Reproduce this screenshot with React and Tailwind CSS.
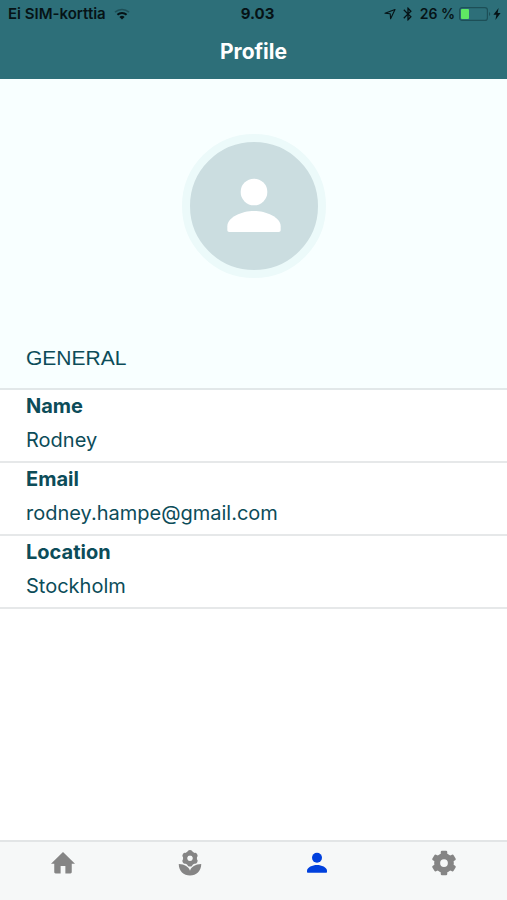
import { useState } from 'react';
import { MdBluetooth } from 'react-icons/md';


const profile = [
    { label: "Name", value: "Rodney" },
    { label: "Email", value: "rodney.hampe@gmail.com" },
    { label: "Location", value: "Stockholm" },
];

const angles = [0, 60, 120, 180, 240, 300];


function HomeIcon({ className }) {
    return (
        <svg viewBox="0 0 24 24" className={className} fill="currentColor" aria-hidden="true">
            <path d="M12 3.2 2.4 12.6H5v6.6c0 .7.4 1.1 1.1 1.1h4v-6h3.8v6h4c.7 0 1.1-.4 1.1-1.1v-6.6h2.6z" />
        </svg>
    );
}

function FlowerIcon({ className }) {
    return (
        <svg viewBox="0 0 24 24" className={className} fill="currentColor" aria-hidden="true">
            <circle cx="12" cy="8.2" r="3.9" fill="none" stroke="currentColor" strokeWidth="3.4" />
            {angles.map((angle) => (
                <circle key={angle} cx="12" cy="3.7" r="2.1" transform={`rotate(${angle} 12 8.2)`} />
            ))}
            <path d="M3 12.8c4.8.2 8 2.2 9 5.4 1-3.2 4.2-5.2 9-5.4 0 5.6-4 9.2-9 9.2s-9-3.6-9-9.2z" />
        </svg>
    );
}

function PersonIcon({ className }) {
    return (
        <svg viewBox="0 0 24 24" className={className} fill="currentColor" aria-hidden="true">
            <circle cx="12" cy="7.8" r="4" />
            <path d="M4 19.2v-1.1c0-2.8 4.4-4.6 8-4.6s8 1.8 8 4.6v1.1c0 .4-.2.6-.6.6H4.6c-.4 0-.6-.2-.6-.6z" />
        </svg>
    );
}

function SettingsIcon({ className }) {
    return (
        <svg viewBox="0 0 24 24" className={className} fill="currentColor" aria-hidden="true">
            <circle cx="12" cy="12" r="5.5" fill="none" stroke="currentColor" strokeWidth="4.8" />
            {angles.map((angle) => (
                <rect key={angle} x="9.4" y="2.2" width="5.2" height="4.6" rx="1" transform={`rotate(${angle} 12 12)`} />
            ))}
        </svg>
    );
}

function WifiIcon() {
    return (
        <svg viewBox="0 0 16 12" className="w-4 h-3" fill="none" aria-hidden="true">
            <path d="M1 4.2a10.3 10.3 0 0 1 14 0" stroke="#1d4f57" strokeWidth="1.6" />
            <path d="M3.4 6.8a6.8 6.8 0 0 1 9.2 0" stroke="#061316" strokeWidth="2" />
            <path d="M8 11.6 5.4 9a3.8 3.8 0 0 1 5.2 0z" fill="#061316" />
        </svg>
    );
}

function LocationIcon() {
    return (
        <svg viewBox="0 0 12 12" className="w-3 h-3" fill="none" stroke="#061316" strokeWidth="1.1" strokeLinejoin="round" aria-hidden="true">
            <path d="M11 1.5 1 5.2l5.2.5.4 5.1z" />
        </svg>
    );
}

function BatteryIcon() {
    return (
        <svg viewBox="0 0 32 14" className="w-8 h-[14px]" aria-hidden="true">
            <rect x="0.6" y="0.6" width="27.8" height="12.8" rx="2.5" fill="none" stroke="#1d4f57" strokeWidth="1.2" />
            <rect x="2" y="2" width="8" height="10" rx="1" fill="#5fe863" />
            <path d="M30 5v4c1.6-.5 1.6-3.5 0-4z" fill="#1d4f57" />
        </svg>
    );
}

function ChargingIcon() {
    return (
        <svg viewBox="0 0 8 12" className="w-2 h-3" fill="#061316" aria-hidden="true">
            <path d="M5.6 0 .4 6.8h3L2.4 12l5.2-7H4.6z" />
        </svg>
    );
}

function StatusBar() {
    return (
        <div className="grid grid-cols-[1fr_auto_1fr] items-center h-7 pl-2 text-[15px] font-semibold text-[#061316]">
            <div className="flex items-center gap-2">
                <span>Ei SIM-korttia</span>
                <WifiIcon />
            </div>
            <span className="font-bold">9.03</span>
            <div className="flex items-center justify-end pr-1.5 text-sm">
                <LocationIcon />
                <MdBluetooth className="size-4 mx-1" />
                <span className="mr-1">26 %</span>
                <BatteryIcon />
                <span className="pl-0.5">
                    <ChargingIcon />
                </span>
            </div>
        </div>
    );
}


const tabs = [
    { id: "home", label: "Home", Icon: HomeIcon },
    { id: "plants", label: "Plants", Icon: FlowerIcon },
    { id: "profile", label: "Profile", Icon: PersonIcon },
    { id: "settings", label: "Settings", Icon: SettingsIcon },
];

export default function App() {
    const [active, setActive] = useState("profile");

    return (
        <div className="min-h-screen flex flex-col bg-white font-['Inter',sans-serif]">
            <header className="bg-[#2d6f79] pb-[11px]">
                <StatusBar />
                <h1 className="pt-2 text-[21px] leading-8 font-bold text-center text-white">Profile</h1>
            </header>

            <main className="flex-1">
                <section className="bg-[#f8ffff] pt-[55px] pb-4 border-b-2 border-[#e2e8e9]">
                    <div className="size-[144px] mx-auto rounded-full border-8 border-[#ecfafa] bg-[#cbdde0] flex items-center justify-center">
                        <PersonIcon className="size-20 text-white" />
                    </div>
                    <h2 className="mt-[66px] px-[26px] text-[21px] leading-7 font-['Liberation_Sans',sans-serif] text-[#0c4c59]">GENERAL</h2>
                </section>

                <dl>
                    {profile.map(({ label, value }) => (
                        <div key={label} className="px-[26px] pb-0.5 border-b-2 border-[#e6e8e9] text-xl text-[#0c4c59]">
                            <dt className="leading-8 font-bold">{label}</dt>
                            <dd className="leading-[37px]">{value}</dd>
                        </div>
                    ))}
                </dl>
            </main>

            <nav className="grid grid-cols-4 h-[60px] border-t-2 border-[#e2e5e6] bg-[#f6f8f8]">
                {tabs.map(({ id, label, Icon }) => (
                    <button
                        key={id}
                        type="button"
                        aria-label={label}
                        onClick={() => setActive(id)}
                        className={`flex justify-center pt-1.5 cursor-pointer ${active === id ? "text-[#0040dd]" : "text-[#858585]"}`}
                    >
                        <Icon className="size-[30px]" />
                    </button>
                ))}
            </nav>
        </div>
    );
}
